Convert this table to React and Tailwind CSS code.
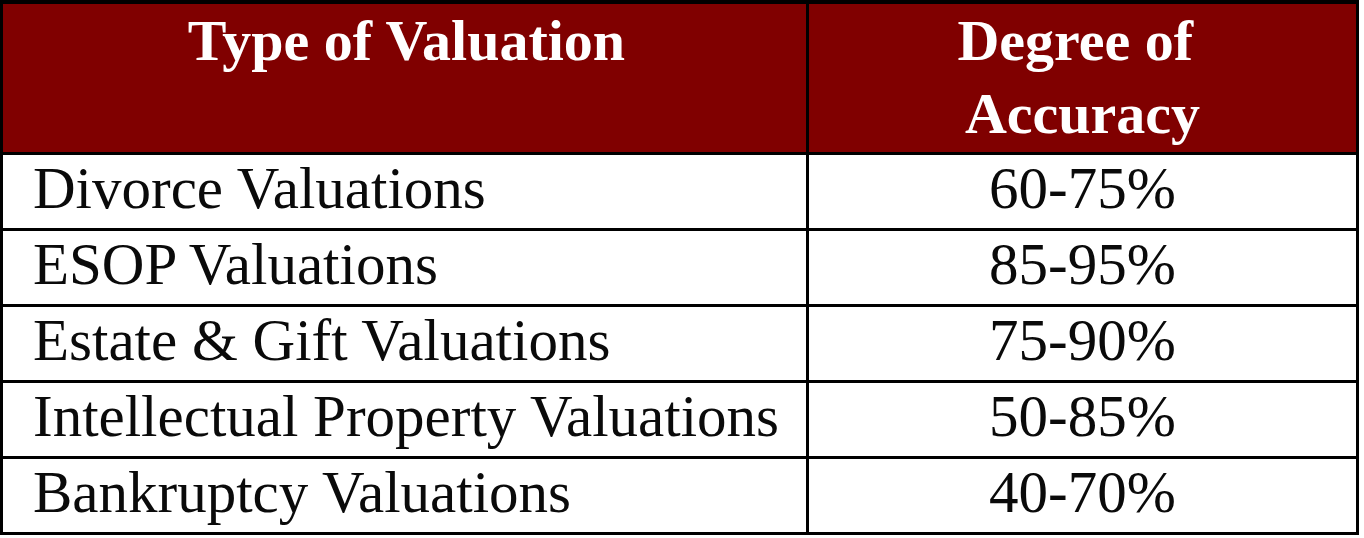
export default function App() {
  const rows = [
    ["Divorce Valuations", "60-75%"],
    ["ESOP Valuations", "85-95%"],
    ["Estate & Gift Valuations", "75-90%"],
    ["Intellectual Property Valuations", "50-85%"],
    ["Bankruptcy Valuations", "40-70%"],
  ];
  return (
    <div className="w-[1364px] h-[538px] bg-white">
      <div
        className="w-[1359px] border-x-[3px] border-t-[4px] border-b-[3px] border-black"
        style={{ fontFamily: '"Liberation Serif", "Times New Roman", serif' }}
      >
        <div className="grid grid-cols-[803px_1fr] h-[148px] bg-[#800000] text-white font-bold text-[58px] leading-[73px]">
          <div className="text-center pl-[4px]">Type of Valuation</div>
          <div className="text-center border-l-[3px] border-black">
            {"Degree of\u00a0"}
            <br />
            Accuracy
          </div>
        </div>
        {rows.map(([a, b]) => (
          <div
            key={a}
            className="grid grid-cols-[803px_1fr] h-[76px] border-t-[3px] border-black text-[#0a0a0a] text-[59px] leading-[67px]"
          >
            <div className="pl-[30px] whitespace-nowrap">{a}</div>
            <div className="text-center border-l-[3px] border-black">{b}</div>
          </div>
        ))}
      </div>
    </div>
  );
}
